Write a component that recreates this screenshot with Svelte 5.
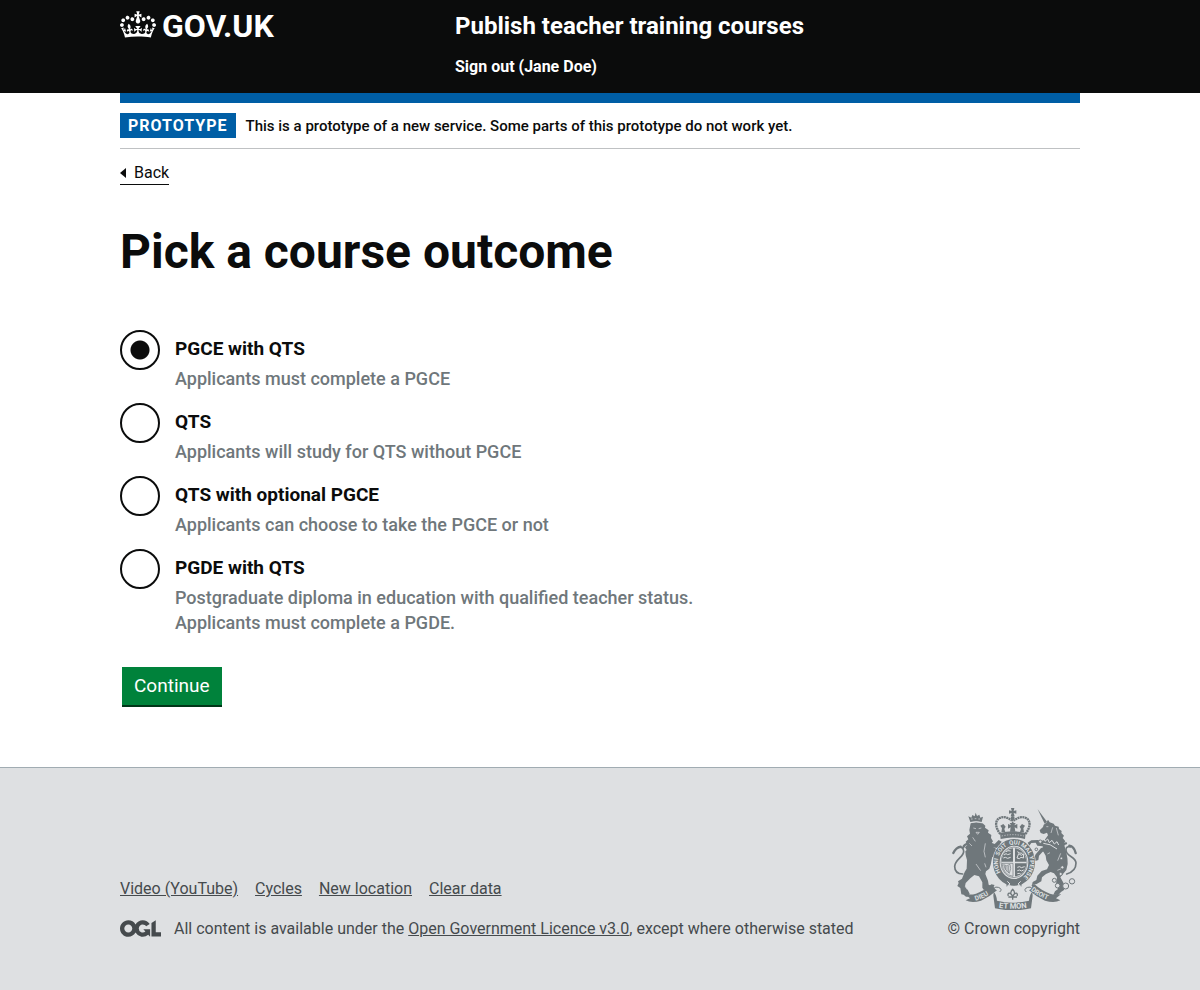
<script>
  let outcome = $state('pgce-with-qts');

  const outcomes = [
    { value: 'pgce-with-qts', label: 'PGCE with QTS', hint: 'Applicants must complete a PGCE' },
    { value: 'qts', label: 'QTS', hint: 'Applicants will study for QTS without PGCE' },
    { value: 'qts-optional', label: 'QTS with optional PGCE', hint: 'Applicants can choose to take the PGCE or not' },
    {
      value: 'pgde-with-qts',
      label: 'PGDE with QTS',
      hint: 'Postgraduate diploma in education with qualified teacher status. Applicants must complete a PGDE.'
    }
  ];

  const footerLinks = ['Video (YouTube)', 'Cycles', 'New location', 'Clear data'];

  const garterWords = [
    { text: 'HONI', at: 70 },
    { text: 'SOIT', at: 119 },
    { text: 'QUI', at: 161 },
    { text: 'MAL', at: 199 },
    { text: 'Y', at: 227 },
    { text: 'PENSE', at: 262 }
  ];
</script>

<header class="header">
  <div class="container header-row">
    <div class="header-logo">
      <a class="logo" href="#home">
        <svg class="crown" viewBox="0 0 132 97" width="36" height="27" aria-hidden="true">
          <path fill="currentColor" fill-rule="evenodd" d="M25 30.2c3.5 1.5 7.7-.2 9.1-3.7 1.5-3.6-.2-7.8-3.9-9.2-3.6-1.4-7.6.3-9.1 3.9-1.4 3.5.3 7.5 3.9 9zM9 39.5c3.6 1.5 7.8-.2 9.2-3.7 1.5-3.6-.2-7.8-3.9-9.1-3.6-1.5-7.6.2-9.1 3.8-1.4 3.5.3 7.5 3.8 9zM4.4 57.2c3.5 1.5 7.7-.2 9.1-3.8 1.5-3.6-.2-7.7-3.9-9.1-3.5-1.5-7.6.3-9.1 3.8-1.4 3.5.3 7.6 3.9 9.1zm38.3-21.4c3.5 1.5 7.7-.2 9.1-3.8 1.5-3.6-.2-7.7-3.9-9.1-3.6-1.5-7.6.3-9.1 3.8-1.3 3.6.4 7.7 3.9 9.1zm64.4-5.6c-3.6 1.5-7.8-.2-9.1-3.7-1.5-3.6.2-7.8 3.8-9.2 3.6-1.4 7.7.3 9.2 3.9 1.3 3.5-.4 7.5-3.9 9zm15.9 9.3c-3.6 1.5-7.7-.2-9.1-3.7-1.5-3.6.2-7.8 3.7-9.1 3.6-1.5 7.7.2 9.2 3.8 1.5 3.5-.3 7.5-3.8 9zm4.7 17.7c-3.6 1.5-7.8-.2-9.2-3.8-1.5-3.6.2-7.7 3.9-9.1 3.6-1.5 7.7.3 9.2 3.8 1.3 3.5-.4 7.6-3.9 9.1zM89.3 35.8c-3.6 1.5-7.8-.2-9.2-3.8-1.4-3.6.2-7.7 3.9-9.1 3.6-1.5 7.7.3 9.2 3.8 1.4 3.6-.3 7.7-3.9 9.1zM69.7 17.7l8.9 4.7V9.3l-8.9 2.8c-.2-.3-.5-.6-.9-.9L72.4 0H59.6l3.5 11.2c-.3.3-.6.5-.9.9l-8.8-2.8v13.1l8.8-4.7c.3.3.6.7.9.9l-5 15.4v.1c-.2.8-.4 1.6-.4 2.4 0 4.1 3.1 7.5 7 8.1h.2c.3 0 .7.1 1 .1.4 0 .7 0 1-.1h.2c4-.6 7.1-4.1 7.1-8.1 0-.8-.1-1.7-.4-2.4V34l-5.1-15.4c.4-.2.7-.6 1-.9zM66 92.8c16.9 0 32.8 1.1 47.1 3.2 4-16.9 8.9-26.7 14-33.5l-9.6-3.4c1 4.9 1.1 7.2 0 10.2-1.5-1.4-3-4.3-4.2-8.7L108.6 76c2.8-2 5-3.2 7.5-3.3-4.4 9.4-10 11.9-13.6 11.2-4.3-.8-6.3-4.6-5.6-7.9 1-4.7 5.7-5.9 8-.5 4.3-8.7-3-11.4-7.6-8.8 7.1-7.2 7.9-13.5 2.1-21.1-8 6.1-8.1 12.3-4.5 20.8-4.7-5.4-12.1-2.5-9.5 6.2 3.4-5.2 7.9-2 7.2 3.1-.6 4.3-6.4 7.8-13.5 7.2-10.3-.9-10.9-8-11.2-13.8 2.5-.5 7.1 1.8 11 7.3L80.2 60c-4.1 4.4-8 5.3-12.3 5.4 1.4-4.4 8-11.6 8-11.6H55.5s6.4 7.2 7.9 11.6c-4.2-.1-8-1-12.3-5.4l1.4 16.4c3.9-5.5 8.5-7.7 10.9-7.3-.3 5.8-.9 12.8-11.1 13.8-7.2.6-12.9-2.9-13.5-7.2-.7-5 3.8-8.3 7.1-3.1 2.7-8.7-4.6-11.6-9.4-6.2 3.7-8.5 3.6-14.7-4.6-20.8-5.8 7.6-5 13.9 2.2 21.1-4.7-2.6-11.9.1-7.7 8.8 2.3-5.5 7.1-4.2 8.1.5.7 3.3-1.3 7.1-5.7 7.9-3.5.7-9-1.8-13.5-11.2 2.5.1 4.7 1.3 7.5 3.3l-4.7-15.4c-1.2 4.4-2.7 7.2-4.3 8.7-1.1-3-.9-5.3 0-10.2l-9.5 3.4c5 6.9 9.9 16.7 14 33.5 14.8-2.1 30.8-3.2 47.7-3.2z" />
        </svg>
        <span>GOV.UK</span>
      </a>
    </div>
    <div class="header-content">
      <a class="service" href="#service">Publish teacher training courses</a>
      <nav><a class="sign-out" href="#sign-out">Sign out (Jane Doe)</a></nav>
    </div>
  </div>
</header>

<div class="container">
  <div class="phase">
    <strong class="tag">PROTOTYPE</strong>
    <span class="phase-text">This is a prototype of a new service. Some parts of this prototype do not work yet.</span>
  </div>

  <a class="back" href="#back">
    <svg viewBox="0 0 6 10" width="6" height="10" aria-hidden="true"><path fill="currentColor" d="M0 5 6 0v10z" /></svg>
    Back
  </a>

  <main>
    <form onsubmit={(event) => event.preventDefault()}>
      <fieldset>
        <legend><h1>Pick a course outcome</h1></legend>
        <div class="radios">
          {#each outcomes as item}
            <div class="radio">
              <input type="radio" name="outcome" id={item.value} value={item.value} bind:group={outcome} aria-describedby="{item.value}-hint" />
              <div class="radio-text">
                <label for={item.value}>{item.label}</label>
                <span class="hint" id="{item.value}-hint">{item.hint}</span>
              </div>
            </div>
          {/each}
        </div>
      </fieldset>
      <button type="submit">Continue</button>
    </form>
  </main>
</div>

<footer class="footer">
  <div class="container footer-row">
    <div class="footer-meta">
      <ul>
        {#each footerLinks as link}
          <li><a href="#footer">{link}</a></li>
        {/each}
      </ul>
      <div class="licence">
        <svg class="ogl" viewBox="0 0 483.2 195.7" width="41" height="17" aria-hidden="true">
          <path fill="currentColor" d="M421.5 142.8V.1l-50.7 32.3v161.1h112.4v-50.7zm-122.3-9.6A47.12 47.12 0 0 1 221 97.8c0-26 21.1-47.1 47.1-47.1 16.7 0 31.4 8.7 39.7 21.8l42.7-27.2A97.63 97.63 0 0 0 268.1 0c-36.5 0-68.3 20.1-85.1 49.7A98 98 0 0 0 97.8 0C43.9 0 0 43.9 0 97.8s43.9 97.8 97.8 97.8c36.5 0 68.3-20.1 85.1-49.7a97.76 97.76 0 0 0 149.6 25.4l19.4 22.2h3v-87.8h-80l24.3 27.5zM97.8 145c-26 0-47.1-21.1-47.1-47.1s21.1-47.1 47.1-47.1 47.1 21.1 47.1 47.1S123.8 145 97.8 145" />
        </svg>
        <span>All content is available under the <a href="#licence">Open Government Licence v3.0</a>, except where otherwise stated</span>
      </div>
    </div>
    <a class="copyright" href="#copyright">
      <svg class="crest" viewBox="36 24 375 306" width="125" height="102" aria-hidden="true">
        <!-- lion -->
        <g fill="#6f777b">
          <path d="M91 66 85 49l9 4 3-8 7 4 3-11 4 10 7-4 3 9 8-3-4 16q-17-5-34 0z" />
          <path d="m92 70 16-3 19 2 9 8-1 6 11 8-2 7 10 7-1 9 6 10-6 8 5 8 10 6-2 14-8 4-6 30-4 12-10 8-2 8 8 20 2 12 10 4 5 10-16 3-14-2-4-6v-16l-10-18-14-4-12 10-14 14-2 10 8 10 6 12-4 9H78l-7-6-7-1-3-19-9-6 4-9-2-5 12-8 8-20 6-10 1-26-4-14-1-12 4-4-5-8 7-7-5-10 8-7-4-9 9-8-2-11z" />
          <path d="m148 126 16 6 12-12 9 5-5 7 5 7-12 5-20-2zM150 154l14 7 10-5 6 8-8 8-20-2z" />
        </g>
        <g fill="none" stroke="#6f777b" stroke-width="5" stroke-linecap="round">
          <path d="M68 222q-24 0-24-23c2-22 29-29 27-46q-2-14-15-11" />
          <path d="M62 140q-14 3-22 19M70 142q2-8 14-11" stroke-width="7" />
        </g>
        <g stroke="#dee0e2" stroke-width="2" fill="none">
          <path d="M91 68q18-5 37 1M100 84l8 2m8 0 8-2M108 97h10l-5 6zM98 112l8 12M136 130l-4 24 4 18M108 192l14 20M76 260l6 9M93 57h5m6-1h5m6 1h5M88 130l8 8M134 190l4 12" />
        </g>

        <!-- unicorn -->
        <g fill="#6f777b">
          <path d="m293 28 28 37-7 6z" />
          <path d="m311 74 8-6 5-9 5 8 12 4 4 6 11 3 1 7 8 6-1 6 8 8-4 7 8 10-5 6c6 20 13 42 12 62l-4 18-10 12-8 10 8 14 6 14-3 10-9 6-8 9-15-1 5-10 9-7-6-15 3-20-9-12-10-4-14 6-12 10-2 12-14 8-14 3 2-9 11-6 3-13 13-14 16-5 6-13-8-14-2-14-8-14L308 138l6-18 10-14-3-8-10 4-9-3-3-8 10-10z" />
          <path d="m318 130-10 9-16-2-5-9-13 1-6 8-5-9 11-7 20-1 7 4 12-4zM324 152l-16 3-11 12-2 13-11 4-3-8 6-13 16-19 14-3z" />
        </g>
        <g fill="none" stroke="#6f777b" stroke-width="5" stroke-linecap="round">
          <path d="M380 222c14-4 28-14 28-33 0-20-33-20-30-41q2-10 13-7" />
          <path d="M388 137q14 2 19 22M368 140q2-10 10-10" stroke-width="7" />
        </g>
        <g stroke="#dee0e2" stroke-width="3" fill="none">
          <path d="m312 113 3 11 8-7 5 11 8-7 7 11 8-7 5 10M310 130q20 0 41 17" />
          <path d="M319 80h6M338 82l-5 17M349 84l6 22M330 158l-8 4M362 160l-9 22M364 206l-12 5" stroke-width="2" />
        </g>
        <g fill="#dee0e2" stroke="#6f777b" stroke-width="3">
          <circle cx="364" cy="175" r="4" /><circle cx="367" cy="202" r="5" />
          <circle cx="362" cy="222" r="5" /><circle cx="343" cy="241" r="6" />
          <circle cx="353" cy="257" r="7" /><circle cx="377" cy="258" r="9" />
          <circle cx="396" cy="244" r="8" />
          <circle cx="289" cy="148" r="4" /><circle cx="301" cy="125" r="5" />
        </g>

        <!-- royal crown -->
        <g fill="#6f777b">
          <path d="M213 24h10l-2 9 8-2v10l-8-2 3 10h-12l3-10-8 2V31l8 2z" />
          <circle cx="218" cy="54" r="6" />
          <path d="M180 99q38-10 77 0l-2 18q-37-9-73 0z" />
          <path d="m213 76-4-7h18l-4 7 9-4v14l-8-4 2 13h-16l2-13-8 4V72zM184 97l2-12-5-8 9-5 7 8-4 7 3 9zM252 97l-2-12 5-8-9-5-7 8 4 7-3 9z" />
        </g>
        <g fill="none" stroke="#6f777b" stroke-width="7" stroke-dasharray="6 1.5">
          <path d="M181 102c-16-20-17-40-2-48 12-6 26-1 37 8M256 102c16-20 17-40 2-48-12-6-26-1-37 8" />
          <path d="M218 58v14" stroke-width="5" />
        </g>
        <path d="M185 108q34-8 67 0" fill="none" stroke="#dee0e2" stroke-width="2" stroke-dasharray="4 4" />

        <!-- garter and shield -->
        <ellipse cx="222" cy="187" rx="65" ry="71" fill="#dee0e2" />
        <ellipse cx="222" cy="187" rx="53" ry="60" fill="none" stroke="#6f777b" stroke-width="20" />
        <ellipse cx="222" cy="187" rx="39" ry="46" fill="#dee0e2" stroke="#6f777b" stroke-width="2" />
        <path id="garter-line" fill="none" d="M222 241a48 54 0 0 1 0-108 48 54 0 0 1 0 108" />
        {#each garterWords as word}
          <text class="motto" font-size="18" text-anchor="middle"><textPath href="#garter-line" startOffset={word.at}>{word.text}</textPath></text>
        {/each}
        <g fill="#6f777b">
          <path d="M219 145v40h-34c1-22 14-38 34-40zM225 145c20 2 33 18 34 40h-34zM225 190h34c-1 22-14 37-34 39z" />
          <path d="m198 242 12 10-10 8zM246 242l-12 10 10 8zM216 246h12l3 10h-18z" />
        </g>
        <g fill="none" stroke="#dee0e2" stroke-width="3">
          <path d="m192 165 6-4 5 3 9-3M190 174l6-2 7 3 9-3M198 155l6-3 8 1" />
          <path d="m232 155 7 4 8 1M231 174l5-13 8 5 6-4 1 12-8-2-5 4zM232 202l7-2 5 3 10-3M232 212l7-2 5 3 7-3M232 221l6-1 4 2M202 244l8 8-8 6M242 244l-8 8 8 6" />
        </g>
        <g fill="none" stroke="#6f777b" stroke-width="2">
          <path d="M186 190h33v39q-29-4-33-39zM191 194q8 7 19-1 5 12-2 27-14-8-17-26zM196 197v11M201 198v16M206 197v21" />
        </g>

        <!-- scroll -->
        <g fill="#6f777b">
          <path d="M74 282q18 4 34-1 26-9 46-28l10 2q-8 8 7 16-22 20-48 31-28 9-46-1l13-6z" />
          <path d="M364 282q-18 4-34-1-26-9-46-28l-10 2q8 8-7 16 22 20 48 31 28 9 46-1l-13-6z" />
          <path d="M161 276q8 6 10 26 47 12 96 0 2-20 10-26l1 11-5 38q-54 12-108 0l-5-38z" />
        </g>
        <g fill="none" stroke="#6f777b" stroke-width="3">
          <path d="M161 276q-3-18 14-14 14 5 4 14M277 276q3-18-14-14-14 5-4 14" />
          <path d="M218 268c-10 10-5 16 0 21 5-5 10-11 0-21zM218 288c-8-14-17-9-13 0M218 288c8-14 17-9 13 0M205 291h26M218 290v9" stroke-width="4" />
        </g>
        <path id="scroll-left" fill="none" d="M107 302q27-7 58-30" />
        <path id="scroll-middle" fill="none" d="M169 322q48 9 100 0" />
        <path id="scroll-right" fill="none" d="M272 271q28 23 64 32" />
        <text class="motto" font-size="20"><textPath href="#scroll-left">DIEU</textPath></text>
        <text class="motto" font-size="23" text-anchor="middle"><textPath href="#scroll-middle" startOffset="50">ET MON</textPath></text>
        <text class="motto" font-size="20"><textPath href="#scroll-right">DROIT</textPath></text>
      </svg>
      © Crown copyright
    </a>
  </div>
</footer>

<style>
  :global(body) {
    margin: 0;
    background: #fff;
    color: #0b0c0c;
    font-family: Roboto, "Liberation Sans", sans-serif;
    font-size: 16px;
    line-height: 20px;
  }

  a {
    color: inherit;
  }

  svg {
    display: block;
    flex: none;
  }

  .container {
    max-width: 960px;
    margin: 0 auto;
  }

  .header {
    background: #0b0c0c;
    color: #fff;
    font-weight: 700;
  }

  .header a {
    text-decoration: none;
  }

  .header-row {
    display: grid;
    grid-template-columns: 1fr 2fr;
    padding: 10px 0 16px;
  }

  .header-content {
    padding-left: 15px;
  }

  .logo {
    display: flex;
    align-items: center;
    gap: 6px;
    font-size: 32px;
    line-height: 32px;
  }

  .crown {
    margin-bottom: 4px;
  }

  .service {
    display: block;
    margin-bottom: 15px;
    font-size: 24px;
    line-height: 32px;
  }

  .phase {
    display: flex;
    align-items: center;
    gap: 10px;
    padding: 10px 0;
    border-top: 10px solid #005ea5;
    border-bottom: 1px solid #bfc1c3;
  }

  .phase-text {
    font-size: 15px;
    font-weight: 500;
  }

  .tag {
    padding: 0 8px;
    background: #005ea5;
    color: #fff;
    letter-spacing: 1px;
    line-height: 25px;
  }

  .back {
    display: inline-flex;
    align-items: center;
    gap: 8px;
    margin-top: 14px;
    padding-bottom: 1px;
    border-bottom: 1px solid #0b0c0c;
    text-decoration: none;
  }

  main {
    padding: 42px 0 60px;
  }

  fieldset {
    min-width: 0;
    margin: 0;
    padding: 0;
    border: 0;
  }

  legend {
    padding: 0;
  }

  h1 {
    margin: 0 0 53px;
    font-size: 48px;
    line-height: 50px;
  }

  .radios {
    display: grid;
    gap: 10px;
    max-width: 640px;
    font-size: 19px;
    line-height: 25px;
  }

  .radio {
    display: flex;
    gap: 15px;
  }

  .radio input {
    appearance: none;
    flex: none;
    width: 40px;
    height: 40px;
    margin: 0;
    border: 2px solid #0b0c0c;
    border-radius: 50%;
    background: #fff;
  }

  .radio input:checked {
    background: radial-gradient(circle, #0b0c0c 9px, transparent 10px);
  }

  .radio-text {
    display: grid;
    gap: 5px;
    padding-top: 6px;
    padding-bottom: 2px;
  }

  label {
    font-weight: 700;
  }

  .hint {
    max-width: 560px;
    color: #6f777b;
    font-size: 18px;
    font-weight: 500;
  }

  button {
    margin: 30px 2px 0;
    padding: 6px 12px 7px;
    border: 0;
    border-bottom: 2px solid #003618;
    background: #00823b;
    color: #fff;
    font-family: inherit;
    font-size: 19px;
    line-height: 25px;
  }

  .footer {
    border-top: 1px solid #a1acb2;
    background: #dee0e2;
    color: #454a4d;
  }

  .footer-row {
    display: flex;
    align-items: flex-end;
    justify-content: space-between;
    padding: 40px 0 51px;
  }

  ul {
    display: flex;
    gap: 17px;
    margin: 0 0 20px;
    padding: 0;
    list-style: none;
  }

  .licence {
    display: flex;
    align-items: center;
    gap: 13px;
  }

  .ogl {
    margin-bottom: 2px;
  }

  .copyright {
    display: grid;
    gap: 9px;
    text-decoration: none;
  }

  .crest {
    justify-self: end;
    margin-right: 3px;
  }

  .motto {
    fill: #dee0e2;
    font-weight: 700;
  }
</style>
